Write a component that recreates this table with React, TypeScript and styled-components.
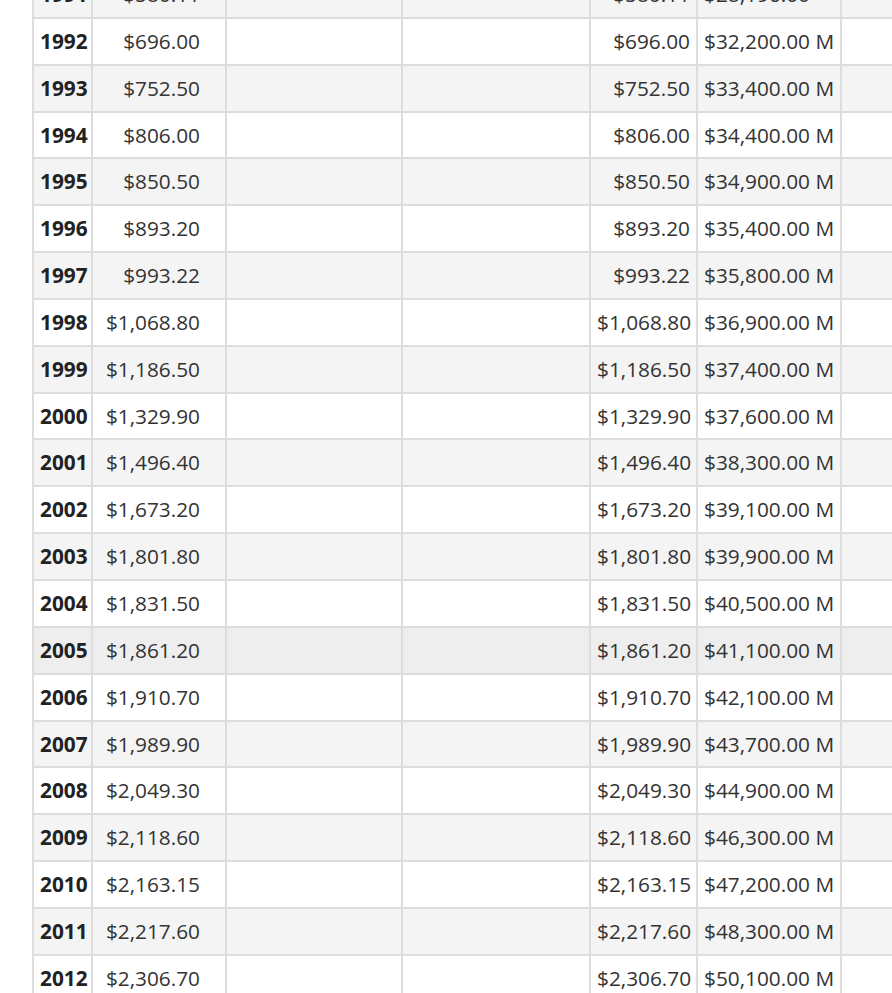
import React from 'react';
import styled, { createGlobalStyle } from 'styled-components';

const GlobalStyle = createGlobalStyle`
  html, body {
    margin: 0;
    padding: 0;
    background: #ffffff;
    overflow: hidden;
  }
`;

const Page = styled.div`
  height: 993px;
  overflow: hidden;
  padding-left: 32px;
  font-family: 'Open Sans', 'Liberation Sans', sans-serif;
  color: #333333;
`;

const Table = styled.table`
  border-collapse: collapse;
  table-layout: fixed;
  width: 960px;
  margin-top: -30px;
  font-size: 20.8px;
`;

const Row = styled.tr<{ $striped: boolean; $hover?: boolean }>`
  background: ${(p) => (p.$hover ? '#eeeeee' : p.$striped ? '#f4f4f4' : '#ffffff')};
`;

const Cell = styled.td<{ $align?: 'left' | 'right'; $padRight?: number }>`
  height: 44.85px;
  padding: 0 ${(p) => p.$padRight ?? 6}px 0 6px;
  border: 2px solid #dddddd;
  text-align: ${(p) => p.$align ?? 'left'};
  vertical-align: middle;
  white-space: nowrap;
  line-height: 1;
`;

const YearCell = styled(Cell)`
  font-weight: 700;
  color: #222222;
`;

type Entry = {
  year: number;
  price: string;
  total: string;
};

const data: Entry[] = [
  { year: 1991, price: '$580.11', total: '$28,196.00' },
  { year: 1992, price: '$696.00', total: '$32,200.00 M' },
  { year: 1993, price: '$752.50', total: '$33,400.00 M' },
  { year: 1994, price: '$806.00', total: '$34,400.00 M' },
  { year: 1995, price: '$850.50', total: '$34,900.00 M' },
  { year: 1996, price: '$893.20', total: '$35,400.00 M' },
  { year: 1997, price: '$993.22', total: '$35,800.00 M' },
  { year: 1998, price: '$1,068.80', total: '$36,900.00 M' },
  { year: 1999, price: '$1,186.50', total: '$37,400.00 M' },
  { year: 2000, price: '$1,329.90', total: '$37,600.00 M' },
  { year: 2001, price: '$1,496.40', total: '$38,300.00 M' },
  { year: 2002, price: '$1,673.20', total: '$39,100.00 M' },
  { year: 2003, price: '$1,801.80', total: '$39,900.00 M' },
  { year: 2004, price: '$1,831.50', total: '$40,500.00 M' },
  { year: 2005, price: '$1,861.20', total: '$41,100.00 M' },
  { year: 2006, price: '$1,910.70', total: '$42,100.00 M' },
  { year: 2007, price: '$1,989.90', total: '$43,700.00 M' },
  { year: 2008, price: '$2,049.30', total: '$44,900.00 M' },
  { year: 2009, price: '$2,118.60', total: '$46,300.00 M' },
  { year: 2010, price: '$2,163.15', total: '$47,200.00 M' },
  { year: 2011, price: '$2,217.60', total: '$48,300.00 M' },
  { year: 2012, price: '$2,306.70', total: '$50,100.00 M' },
];

const columnWidths = [59, 134, 176, 188, 107, 144, 152];

const App: React.FC = () => {
  return (
    <>
      <GlobalStyle />
      <Page>
        <Table>
          <colgroup>
            {columnWidths.map((w, i) => (
              <col key={i} style={{ width: w }} />
            ))}
          </colgroup>
          <tbody>
            {data.map((row, i) => (
              <Row key={row.year} $striped={i % 2 === 0} $hover={row.year === 2005}>
                <YearCell>{row.year}</YearCell>
                <Cell $align="right" $padRight={25}>{row.price}</Cell>
                <Cell />
                <Cell />
                <Cell $align="right">{row.price}</Cell>
                <Cell>{row.total}</Cell>
                <Cell />
              </Row>
            ))}
          </tbody>
        </Table>
      </Page>
    </>
  );
};

export default App;
